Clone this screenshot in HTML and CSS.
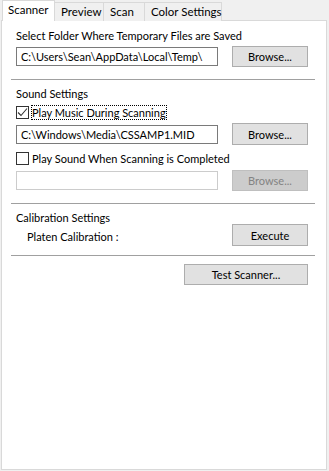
FILE: index.html
```html
<!DOCTYPE html>
<html>

<head>
    <title>Scanner Settings</title>
    <link rel="stylesheet" href="styles.css">
</head>

<body>
    <div class="tabs">
        <div class="tab tabAtivo tabScanner">Scanner</div>
        <div class="tab tabPreview">Preview</div>
        <div class="tab tabScan">Scan</div>
        <div class="tab tabCor">Color Settings</div>
    </div>

    <div class="painel">
        <div class="grupo grupoPasta">
            <div class="rotulo">Select Folder Where Temporary Files are Saved</div>
            <div class="linha">
                <div class="campo">C:\Users\Sean\AppData\Local\Temp\</div>
                <button class="btn">Browse...</button>
            </div>
        </div>

        <hr class="separador">

        <div class="grupo grupoSom">
            <div class="rotulo">Sound Settings</div>
            <div class="check checkMusica">
                <span class="caixa">
                    <svg width="11" height="11" viewBox="0 0 11 11">
                        <path d="M1 5.5 L4 8.5 L10 1.5" fill="none" stroke="#333" stroke-width="1.1"/>
                    </svg>
                </span>
                <span class="textoCheck foco">Play Music During Scanning</span>
            </div>
            <div class="linha linhaMusica">
                <div class="campo">C:\Windows\Media\CSSAMP1.MID</div>
                <button class="btn">Browse...</button>
            </div>
            <div class="check checkFim">
                <span class="caixa"></span>
                <span class="textoCheck">Play Sound When Scanning is Completed</span>
            </div>
            <div class="linha linhaFim">
                <div class="campo desativado"></div>
                <button class="btn desativado" disabled>Browse...</button>
            </div>
        </div>

        <hr class="separador">

        <div class="grupo grupoCalibracao">
            <div class="rotulo rotuloCalibracao">Calibration Settings</div>
            <div class="linha">
                <div class="subrotulo">Platen Calibration :</div>
                <button class="btn">Execute</button>
            </div>
        </div>

        <hr class="separador separadorFinal">

        <div class="grupo grupoTeste">
            <div class="linha linhaTeste">
                <button class="btn btnTeste">Test Scanner...</button>
            </div>
        </div>
    </div>
</body>

</html>
```

FILE: styles.css
```css
body {
    margin: 0;
    background-color: #f0f0f0;
    font-family: Lato, "Noto Sans", Arial, sans-serif;
    font-size: 11px;
    color: #000;
    width: 329px;
    height: 471px;
    overflow: hidden;
}

/* abas */
.tabs {
    display: flex;
    align-items: flex-end;
    margin-left: 2px;
    height: 21px;
    position: relative;
    z-index: 1;
}

.tab {
    box-sizing: border-box;
    height: 19px;
    line-height: 18px;
    padding-left: 6px;
    font-size: 11.5px;
    background-color: #f0f0f0;
    border: 1px solid #d9d9d9;
    border-bottom: none;
    margin-left: -1px;
    white-space: nowrap;
}

.tabAtivo {
    height: 21px;
    line-height: 18px;
    background-color: #fff;
    margin-left: 0;
    padding-left: 5px;
}

.tabScanner { width: 53px; }
.tabPreview { width: 50px; }
.tabScan { width: 42px; }
.tabCor { width: 78px; }

/* painel */
.painel {
    box-sizing: border-box;
    margin-left: 1px;
    margin-top: -1px;
    width: 326px;
    height: 450px;
    background-color: #fff;
    border: 1px solid #d9d9d9;
    padding: 6px 11px 0 9px;
}

.grupo {
    padding: 0 7px 0 5px;
}

.rotulo {
    line-height: 15px;
}

.linha {
    display: flex;
    justify-content: space-between;
    align-items: center;
    margin-top: 3px;
    height: 21px;
}

.campo {
    box-sizing: border-box;
    width: 202px;
    height: 19px;
    line-height: 17px;
    border: 1px solid #7a7a7a;
    padding-left: 4px;
    white-space: nowrap;
    overflow: hidden;
}

.campo.desativado {
    border-color: #cccccc;
}

.btn {
    box-sizing: border-box;
    width: 76px;
    height: 21px;
    padding: 0;
    font-family: inherit;
    font-size: 11px;
    color: #000;
    background-color: #e1e1e1;
    border: 1px solid #adadad;
    border-radius: 0;
}

.btn.desativado {
    background-color: #cccccc;
    border-color: #bfbfbf;
    color: #838383;
}

.separador {
    border: none;
    border-top: 1px solid #a0a0a0;
    margin: 12px 0 0 0;
    height: 0;
}

/* checkbox */
.check {
    display: flex;
    align-items: center;
    height: 15px;
}

.caixa {
    box-sizing: border-box;
    width: 13px;
    height: 13px;
    border: 1px solid #333;
    background-color: #fff;
    margin-right: 2px;
    display: flex;
    align-items: center;
    justify-content: center;
}

.textoCheck {
    line-height: 13px;
    border: 1px solid transparent;
    white-space: nowrap;
}

.textoCheck.foco {
    border: 1px dotted #000;
}

.grupoPasta .rotulo { margin-top: 1px; }
.grupoSom .rotulo { margin-top: 6px; }
.checkMusica { margin-top: 4px; }
.linhaMusica { margin-top: 3px; height: 22px; }
.linhaMusica .btn { height: 22px; }
.checkFim { margin-top: 6px; }
.linhaFim { margin-top: 4px; }

.rotuloCalibracao {
    margin-top: 7px;
    line-height: 13px;
}

.grupoCalibracao .linha {
    margin-top: 0;
    height: 22px;
}

.grupoCalibracao .btn { height: 22px; }

.subrotulo {
    padding-left: 11px;
    padding-top: 2px;
}

.separadorFinal { margin-top: 9px; }

.linhaTeste {
    justify-content: flex-end;
    margin-top: 8px;
}

.btnTeste {
    width: 124px;
}
```
